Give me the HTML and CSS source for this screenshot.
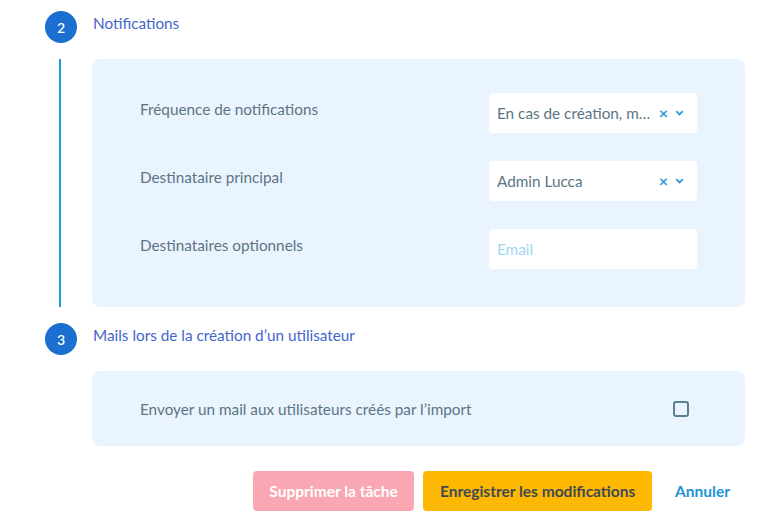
FILE: index.html
```html
<!DOCTYPE html>
<html lang="fr">
<head>
<meta charset="utf-8">
<link rel="stylesheet" href="styles.css">
</head>
<body>
<div class="page">
  <div class="step-head">
    <span class="bullet">2</span>
    <span class="step-title">Notifications</span>
  </div>
  <div class="step-body">
    <div class="rail"><span class="line"></span></div>
    <div class="panel panel-form">
      <div class="row">
        <span class="label">Fréquence de notifications</span>
        <div class="select">
          <span class="value">En cas de création, m…</span>
          <span class="clear">×</span>
          <svg class="chev" width="9" height="6" viewBox="0 0 9 6"><path d="M1.2 1.2l3.3 3.3 3.3-3.3" fill="none" stroke="currentColor" stroke-width="1.8"/></svg>
        </div>
      </div>
      <div class="row">
        <span class="label">Destinataire principal</span>
        <div class="select">
          <span class="value">Admin Lucca</span>
          <span class="clear">×</span>
          <svg class="chev" width="9" height="6" viewBox="0 0 9 6"><path d="M1.2 1.2l3.3 3.3 3.3-3.3" fill="none" stroke="currentColor" stroke-width="1.8"/></svg>
        </div>
      </div>
      <div class="row">
        <span class="label">Destinataires optionnels</span>
        <div class="select">
          <span class="placeholder">Email</span>
        </div>
      </div>
    </div>
  </div>
  <div class="step-head step3">
    <span class="bullet">3</span>
    <span class="step-title">Mails lors de la création d’un utilisateur</span>
  </div>
  <div class="step-body">
    <div class="rail"></div>
    <div class="panel panel-check">
      <span class="label-plain">Envoyer un mail aux utilisateurs créés par l’import</span>
      <span class="checkbox"></span>
    </div>
  </div>
  <div class="actions">
    <button class="btn btn-danger">Supprimer la tâche</button>
    <button class="btn btn-primary">Enregistrer les modifications</button>
    <button class="btn btn-link">Annuler</button>
  </div>
</div>
</body>
</html>
```
FILE: styles.css
```css
* { box-sizing: border-box; }
html, body { margin: 0; padding: 0; background: #fff; }
body {
  font-family: "Source Sans Pro", Lato, "Noto Sans", sans-serif;
  font-size: 15.3px;
  color: #5c7584;
  width: 771px;
  height: 529px;
  overflow: hidden;
}
.page { padding: 11px 26px 0 45px; }
.step-head {
  display: flex;
  align-items: flex-start;
  gap: 16px;
  height: 32px;
}
.step3 { margin-top: 16px; }
.bullet {
  width: 32px;
  height: 32px;
  border-radius: 50%;
  background: #1b6fd1;
  color: #fff;
  font-size: 14px;
  font-weight: 600;
  display: flex;
  align-items: center;
  justify-content: center;
  flex: none;
}
.step-title {
  color: #4466cc;
  font-size: 15.3px;
  line-height: 24px;
}
.step-body {
  display: flex;
  margin-top: 16px;
}
.rail {
  width: 47px;
  flex: none;
  display: flex;
  padding-left: 14px;
}
.line {
  width: 2px;
  background: #1aa0dc;
}
.panel {
  flex: 1;
  background: #eaf4fe;
  border-radius: 8px;
}
.panel-form {
  padding: 34px 48px 38px 48px;
  display: flex;
  flex-direction: column;
  gap: 28px;
}
.row {
  display: flex;
  justify-content: space-between;
  align-items: flex-start;
}
.label {
  line-height: 20px;
  margin-top: 6px;
}
.select {
  width: 208px;
  height: 40px;
  background: #fff;
  border-radius: 4px;
  display: flex;
  align-items: center;
  padding: 0 13px 0 8px;
}
.value {
  flex: 1;
  color: #5c7584;
  white-space: nowrap;
  overflow: hidden;
}
.placeholder {
  color: #9fd6f4;
}
.clear {
  color: #2a9ad8;
  font-size: 16px;
  font-weight: 700;
  margin: 0 7px 0 4px;
  line-height: 1;
}
.chev { color: #2a9ad8; flex: none; }
.panel-check {
  height: 75px;
  padding: 0 56px 0 48px;
  display: flex;
  align-items: center;
  justify-content: space-between;
}
.label-plain { line-height: 20px; }
.checkbox {
  width: 16px;
  height: 16px;
  border: 2px solid #5b7f93;
  border-radius: 3px;
  flex: none;
}
.actions {
  margin-top: 25px;
  display: flex;
  justify-content: flex-end;
  gap: 8px;
}
.btn {
  height: 40px;
  border: none;
  border-radius: 4px;
  font-family: inherit;
  font-size: 15.5px;
  font-weight: 700;
  padding: 0 16px;
  cursor: pointer;
}
.btn-danger { background: #f9a7b3; color: #fff; width: 161px; }
.btn-primary { background: #ffb800; color: #3d4a56; width: 229px; margin-left: 1px; }
.btn-link { background: transparent; color: #1a94d8; padding: 0 15px; }
```
